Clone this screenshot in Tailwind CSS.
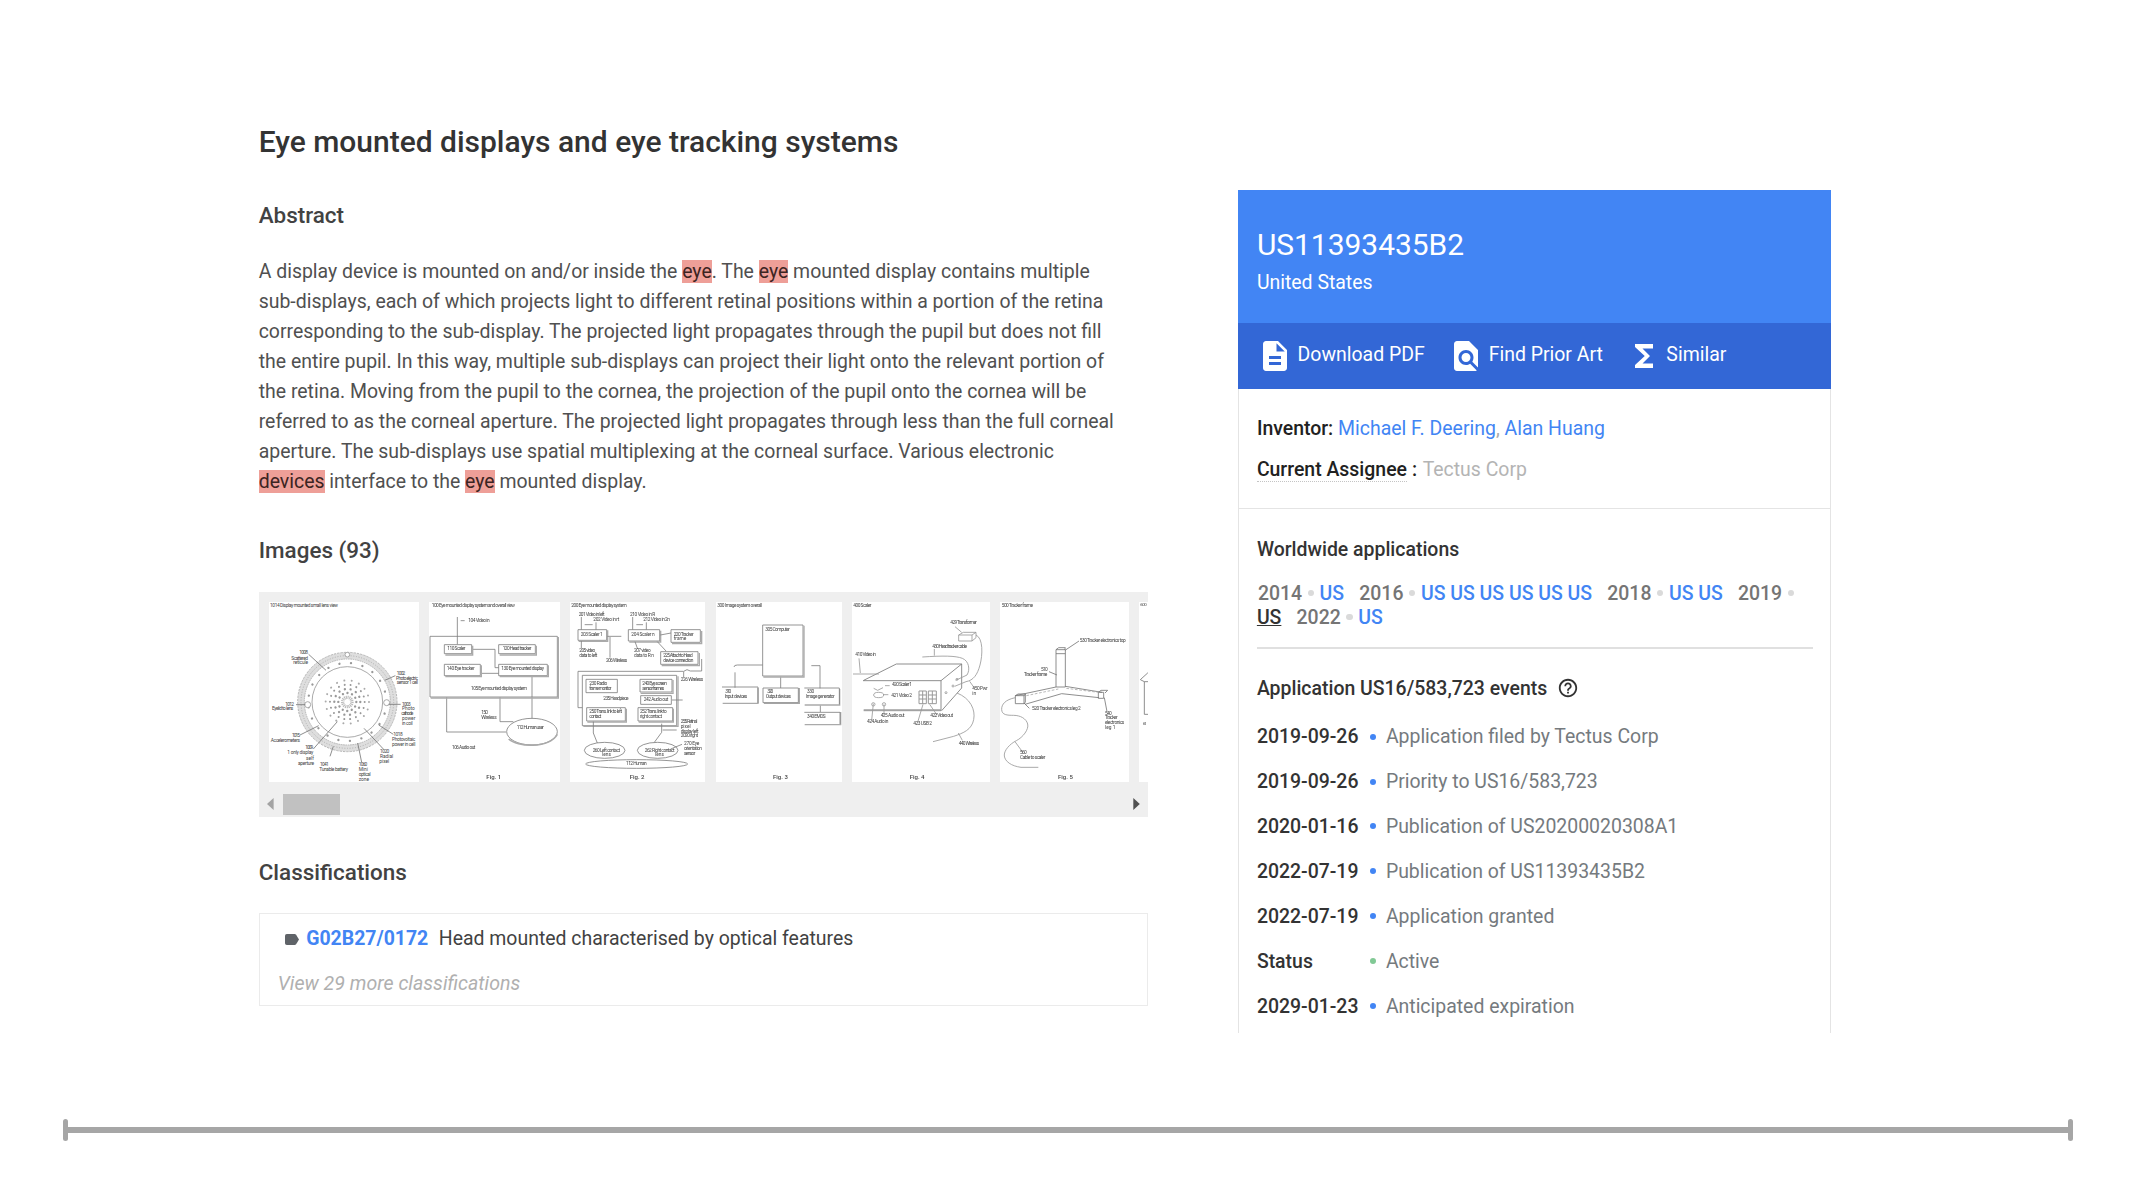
<!DOCTYPE html>
<html lang="en">
<head>
<meta charset="utf-8">
<title>US11393435B2 - Eye mounted displays and eye tracking systems</title>
<script src="https://cdn.jsdelivr.net/npm/@tailwindcss/browser@4"></script>
</head>
<body class="bg-white font-['Roboto',sans-serif] text-[19.46px] leading-[29.93px] text-[#505050]">
<div class="flex h-[1202px] w-[2136px] flex-col overflow-hidden">
  <main class="flex h-[1119px] pl-[258.7px]">
    <section class="w-[889px] shrink-0 pt-[122px]">
      <h1 class="text-[29.97px] leading-10 font-medium whitespace-nowrap text-[#333]">Eye mounted displays and eye tracking systems</h1>
      <h2 class="mt-[38px] text-[22.45px] leading-[30px] font-medium text-[#424242]">Abstract</h2>
      <p class="mt-[27.2px] whitespace-nowrap">
        A display device is mounted on and/or inside the <mark class="bg-[#ee9f98] text-[#3c2422]">eye</mark>. The <mark class="bg-[#ee9f98] text-[#3c2422]">eye</mark> mounted display contains multiple<br>
        sub-displays, each of which projects light to different retinal positions within a portion of the retina<br>
        corresponding to the sub-display. The projected light propagates through the pupil but does not fill<br>
        the entire pupil. In this way, multiple sub-displays can project their light onto the relevant portion of<br>
        the retina. Moving from the pupil to the cornea, the projection of the pupil onto the cornea will be<br>
        referred to as the corneal aperture. The projected light propagates through less than the full corneal<br>
        aperture. The sub-displays use spatial multiplexing at the corneal surface. Various electronic<br>
        <mark class="bg-[#ee9f98] text-[#3c2422]">devices</mark> interface to the <mark class="bg-[#ee9f98] text-[#3c2422]">eye</mark> mounted display.
      </p>
      <h2 class="mt-[38.4px] text-[22.45px] leading-[30px] font-medium text-[#424242]">Images (93)</h2>

      <div class="mt-[26.6px] flex h-[225.3px] flex-col overflow-hidden bg-[#efefef] pt-[10.7px]">
        <div class="flex h-[180px] shrink-0 gap-[10px] pl-[10.5px] blur-[0.4px]">
          <!-- Contact lens overview -->
          <svg class="h-[180px] w-[150px] shrink-0 bg-white" viewBox="57 67 450 540" fill="none" stroke="#999" stroke-width="2.5" font-family="Roboto, sans-serif" font-size="14.5">
            <circle cx="292" cy="367" r="139" stroke="#dedede" stroke-width="19"/>
            <circle cx="292" cy="367" r="149" stroke="#aaa" stroke-dasharray="7 3"/>
            <circle cx="292" cy="367" r="139" stroke="#b0b0b0" stroke-width="3" stroke-dasharray="3 5"/>
            <circle cx="292" cy="367" r="129" stroke="#aaa" stroke-dasharray="5 2"/>
            <circle cx="292" cy="367" r="117" stroke="#999" stroke-width="7" stroke-linecap="round" stroke-dasharray="0.1 35"/>
            <circle cx="292" cy="367" r="106"/>
            <circle cx="292" cy="367" r="14" stroke="#bbb" stroke-width="10" stroke-dasharray="3 2"/>
            <circle cx="292" cy="367" r="27" stroke-width="7" stroke-linecap="round" stroke-dasharray="0.1 14"/>
            <circle cx="292" cy="367" r="39" stroke-width="7" stroke-linecap="round" stroke-dasharray="0.1 17.4"/>
            <circle cx="292" cy="367" r="52" stroke="#999" stroke-width="6" stroke-linecap="round" stroke-dasharray="0.1 18"/>
            <circle cx="292" cy="367" r="65" stroke="#aaa" stroke-width="6" stroke-linecap="round" stroke-dasharray="0.1 22.6"/>
            <g fill="#fff"><circle cx="173" cy="375" r="9"/><circle cx="410" cy="369" r="9"/><circle cx="292" cy="225" r="7"/></g>
            <path d="M176 224l52 48M138 375h28M150 466l56-28M190 508l72-82M240 530l10-30M335 548l-12-58M400 508l-58-62M430 464l-44-28M436 288l-32 14M452 374h-36" stroke="#777"/>
            <g fill="#444" stroke="none">
              <text x="60" y="81" textLength="204">1014 Display mounted small lens view</text>
              <text x="148" y="224" textLength="26">1008</text><text x="124" y="240" textLength="50">Scattered</text><text x="130" y="254" textLength="44">reticule</text>
              <text x="440" y="286" textLength="26">1002</text><text x="438" y="300" textLength="66">Photo electric</text><text x="440" y="314" textLength="64">sensor 1 cell</text>
              <text x="106" y="378" textLength="26">1012</text><text x="66" y="392" textLength="64">Eyelid to lens</text>
              <text x="456" y="378" textLength="26">1003</text><text x="456" y="392">Photo</text><text x="454" y="407" textLength="36">cathode</text><text x="456" y="422">power</text><text x="456" y="437" textLength="32">in coil</text>
              <text x="126" y="471" textLength="24">1015</text><text x="62" y="487" textLength="88">Accelerometers</text>
              <text x="430" y="469" textLength="28">1018</text><text x="426" y="485" textLength="70">Photovoltaic</text><text x="426" y="500" textLength="70">power in cell</text>
              <text x="166" y="508" textLength="24">1009</text><text x="112" y="524" textLength="78">1 only display</text><text x="168" y="540">self</text><text x="144" y="556" textLength="48">aperture</text>
              <text x="390" y="519" textLength="28">1020</text><text x="390" y="534">Radial</text><text x="388" y="549">pixel</text>
              <text x="210" y="558" textLength="26">1041</text><text x="208" y="574" textLength="86">Tunable battery</text>
              <text x="326" y="558" textLength="26">1060</text><text x="326" y="574">Mini</text><text x="326" y="590" textLength="36">optical</text><text x="326" y="604">zone</text>
            </g>
          </svg>
          <!-- Fig. 1 -->
          <svg class="h-[180px] w-[131px] shrink-0 bg-white" viewBox="537 67 393 540" fill="none" stroke="#808080" stroke-width="2.5" font-family="Roboto, sans-serif" font-size="14.5">
            <path d="M540 170h382v182H540zM622 112v82M632 123h12M667 209h68v55h11M693 281h53M846 290v126M590 352v105h178M750 352v74h40"/>
            <path d="M542 355h383V172" stroke="#aaa" stroke-width="4"/>
            <path d="M583 195h82v27h-82zM746 195h110v27H746zM583 254h108v34H583zM746 254h146v34H746z"/>
            <path d="M586 226h82v-28M749 226h110v-28M586 291h108v-34M749 291h146v-34" stroke="#aaa" stroke-width="4"/>
            <ellipse cx="846" cy="456" rx="76" ry="40"/><path d="M776 478c25 24 120 30 146-14" stroke="#aaa" stroke-width="5"/>
            <g fill="#444" stroke="none">
              <text x="545" y="81" textLength="250">100 Eye mounted display system and overall view</text>
              <text x="655" y="127" textLength="64">104 Video in</text>
              <text x="592" y="211" textLength="54">110 Scaler</text><text x="758" y="211" textLength="86">120 Head tracker</text>
              <text x="590" y="270" textLength="84">140 Eye tracker</text><text x="754" y="270" textLength="128">130 Eye mounted display</text>
              <text x="663" y="330" textLength="168">105 Eye mounted display system</text>
              <text x="694" y="404" textLength="20">150</text><text x="694" y="418" textLength="46">Wireless</text>
              <text x="800" y="447" textLength="82">112 Human user</text><text x="606" y="509" textLength="70">106 Audio out</text>
              <text x="709" y="599" font-size="18" font-weight="500">Fig. 1</text>
            </g>
          </svg>
          <!-- Fig. 2 -->
          <svg class="h-[180px] w-[135px] shrink-0 bg-white" viewBox="60 67 405 540" fill="none" stroke="#808080" stroke-width="2.5" font-family="Roboto, sans-serif" font-size="14.5">
            <path d="M84 150h86v32H84zM235 150h94v34h-94zM363 150h88v38h-88zM332 216h112v38H332zM108 299h94v40h-94zM270 299h96v38h-96zM272 348h92v26h-92zM110 384h116v40H110zM264 384h104v40H264z"/>
            <path d="M86 185h87v-33M238 187h94v-34M366 192h89v-38M335 258h113v-38M272 341h97v-40M112 427h117v-40M266 427h104v-40" stroke="#aaa" stroke-width="4"/>
            <path d="M97 287h283v151H97zM97 384H84V275h316"/><path d="M100 440h284V290" stroke="#aaa" stroke-width="4"/>
            <path d="M94 112v38M138 128v22M104 135h24M248 112v38M289 128v22M259 135h20M172 170h42M180 172v62M94 184v22M255 186l8 22M322 186l26 28M331 166l32-6M455 238v36h-34l-10-4-10 5v18M366 361h32M130 426v34l12 30M335 432v26l-22 30M338 451h42M362 508l34-14"/>
            <ellipse cx="164" cy="512" rx="61" ry="24"/><ellipse cx="323" cy="512" rx="61" ry="24"/><ellipse cx="260" cy="553" rx="153" ry="13"/>
            <g fill="#444" stroke="none">
              <text x="64" y="81" textLength="166">200 Eye mounted display system</text>
              <text x="86" y="109" textLength="78">201 Video in left</text><text x="130" y="125" textLength="78">202 Video in rt</text>
              <text x="240" y="109" textLength="76">210 Video in R</text><text x="280" y="125" textLength="80">212 Video in 2n</text>
              <text x="92" y="170" textLength="66">203 Scaler 1</text><text x="244" y="170" textLength="70">204 Scaler n</text>
              <text x="371" y="168" textLength="60">220 Tracker</text><text x="371" y="182">frame</text>
              <text x="88" y="217" textLength="48">205 video</text><text x="88" y="232" textLength="54">data to left</text><text x="168" y="247" textLength="64">206 Wireless</text>
              <text x="252" y="217" textLength="50">207 video</text><text x="252" y="232" textLength="60">data to R n</text>
              <text x="340" y="232" textLength="88">225 Attach to Head</text><text x="340" y="247" textLength="90">device connection</text>
              <text x="392" y="305" textLength="68">226 Wireless</text>
              <text x="118" y="316" textLength="54">230 Radio</text><text x="118" y="330" textLength="66">frame monitor</text>
              <text x="277" y="316" textLength="74">240 Eye screen</text><text x="277" y="330" textLength="66">sensor frames</text>
              <text x="160" y="361" textLength="76">235 Headpiece</text><text x="281" y="365" textLength="74">242 Audio out</text>
              <text x="118" y="400" textLength="98">250 Trans. link to left</text><text x="118" y="414" textLength="36">contact</text>
              <text x="270" y="400" textLength="80">252 Trans. link to</text><text x="270" y="414" textLength="66">right contact</text>
              <text x="392" y="431" textLength="50">255 Retinal</text><text x="392" y="445">pixel</text><text x="392" y="459" textLength="54">display left</text><text x="392" y="473" textLength="52">2020 right</text>
              <text x="128" y="516" textLength="82">260 Left contact</text><text x="156" y="529">lens</text><text x="284" y="516" textLength="90">262 Right contact</text><text x="315" y="529">lens</text>
              <text x="402" y="497" textLength="46">270 Eye</text><text x="402" y="511" textLength="54">orientation</text><text x="402" y="525" textLength="34">sensor</text>
              <text x="228" y="557" textLength="62">112 Human</text>
              <text x="239" y="599" font-size="18" font-weight="500">Fig. 2</text>
            </g>
          </svg>
          <!-- Fig. 3 -->
          <svg class="ml-[0.7px] h-[180px] w-[126px] shrink-0 bg-white" viewBox="498 67 378 540" fill="none" stroke="#808080" stroke-width="2.5" font-family="Roboto, sans-serif" font-size="14.5">
            <path d="M638 136h121v153H638zM638 256h-76q-10 0-10 6M555 278v46M692 291v34M784 258h26v68M811 377v20"/>
            <path d="M640 292h122V138M518 371h106v-46M642 371h106v-46M764 376h105v-48M764 435h108v-38" stroke="#aaa" stroke-width="4"/>
            <path d="M516 322h108v48M639 325h106v44H639zM763 325h105v49M763 398h107v35"/>
            <g fill="#444" stroke="none">
              <text x="502" y="81" textLength="134">300 Image system overall</text><text x="646" y="153" textLength="74">305 Computer</text>
              <text x="526" y="339" textLength="18">310</text><text x="524" y="354" textLength="68">Input devices</text><text x="652" y="341" textLength="18">320</text><text x="647" y="356" textLength="76">Output devices</text>
              <text x="771" y="341" textLength="22">330</text><text x="768" y="356" textLength="86">Image generator</text><text x="771" y="416" textLength="56">340 EMDS</text>
              <text x="669" y="599" font-size="18" font-weight="500">Fig. 3</text>
            </g>
          </svg>
          <!-- Fig. 4 -->
          <svg class="h-[180px] w-[138px] shrink-0 bg-white" viewBox="35 67 414 540" fill="none" stroke="#999" stroke-width="2.5" font-family="Roboto, sans-serif" font-size="14.5">
            <path d="M68 303h234v90H70M302 303l62-50H168L70 302M364 253v72l-60 68" stroke="#777"/><path d="M70 390h232" stroke="#aaa" stroke-width="3"/>
            <path d="M355 166h40v18h-40zM355 166l14-8h38l-12 8M407 158v16l-12 10M344 141l20 17"/>
            <path d="M407 166c22 10 20 60 12 90s-20 46-42 50l-34 14M246 232c60-4 100-4 120 4s24 34 14 50l-34 16M350 340c40 16 56 50 50 80s-30 40-60 50l-62 16M282 208v20M56 236l4 44M38 283h78M388 305l14 20M354 460l12 22M248 374l-16 54M268 374l22 32M99 372l-5 50M131 374v30M134 318h14M128 345h16M100 326l12 6 16-8"/>
            <ellipse cx="115" cy="346" rx="15" ry="8"/><circle cx="99" cy="374" r="5"/><circle cx="131" cy="374" r="5"/><circle cx="350" cy="299" r="3"/><circle cx="338" cy="319" r="3"/><circle cx="317" cy="339" r="3"/>
            <path d="M236 334h22v38h-22zM264 334h24v38h-24zM236 346h22M236 358h22M247 334v38M264 346h24M264 358h24M276 334v38" stroke-width="3"/>
            <g fill="#444" stroke="none">
              <text x="39" y="81" textLength="54">400 Scaler</text><text x="330" y="132" textLength="80">429 Transformer</text><text x="276" y="206" textLength="104">430 Head tracker cable</text>
              <text x="45" y="229" textLength="62">410 Video in</text><text x="155" y="318" textLength="60">420 Scaler 1</text><text x="153" y="351" textLength="62">421 Video 2</text>
              <text x="121" y="411" textLength="72">425 Audio out</text><text x="80" y="429" textLength="64">424 Audio in</text><text x="270" y="412" textLength="68">422 Video out</text><text x="219" y="435" textLength="56">423 USB 2</text>
              <text x="396" y="332" textLength="46">450 Pwr</text><text x="396" y="346">in</text><text x="355" y="495" textLength="62">440 Wireless</text>
              <text x="208" y="599" font-size="18" font-weight="500">Fig. 4</text>
            </g>
          </svg>
          <!-- Fig. 5 -->
          <svg class="h-[180px] w-[129px] shrink-0 bg-white" viewBox="481 67 387 540" fill="none" stroke="#999" stroke-width="2.5" font-family="Roboto, sans-serif" font-size="14.5">
            <path d="M649 210v112M677 210v112M649 210h28M649 222h28M649 210l8-6h20l-2 6M649 322h28M718 184l-42 28M628 276l24 10" stroke="#777"/>
            <path d="M649 322l-122 26M677 320l110 18M556 374l110-32 112 12M527 348h26v24h-26zM527 348l8-5h22l-4 6M557 343v24l-4 6M776 338h16v18h-16zM776 338l8-6h20l-8 8M553 370l16 16M794 354l8 42" stroke="#777"/>
            <path d="M560 348l96-20M680 326l96 12" stroke="#aaa" stroke-dasharray="8 5"/>
            <path d="M527 354c-30 6-42 20-41 36s16 17 36 17 38 10 42 26-14 40-34 50-38 30-36 46 20 30 50 34h52M526 486l22 30"/>
            <g fill="#444" stroke="none">
              <text x="486" y="81" textLength="94">500 Tracker frame</text><text x="720" y="188" textLength="138">530 Tracker electronics top</text>
              <text x="604" y="275" textLength="20">510</text><text x="553" y="290" textLength="70">Tracker frame</text><text x="577" y="390" textLength="146">520 Tracker electronics leg 2</text>
              <text x="796" y="405" textLength="20">540</text><text x="796" y="419" textLength="38">Tracker</text><text x="796" y="433" textLength="58">electronics</text><text x="796" y="447">leg 1</text>
              <text x="541" y="524" textLength="20">560</text><text x="541" y="539" textLength="76">Cable to scaler</text>
              <text x="655" y="599" font-size="18" font-weight="500">Fig. 5</text>
            </g>
          </svg>
          <!-- Fig. 6, cut by the scroller's edge -->
          <svg class="h-[180px] w-[129px] shrink-0 bg-white" viewBox="898 67 387 540" fill="none" stroke="#777" stroke-width="2.5" font-family="Roboto, sans-serif" font-size="13">
            <path d="M902 300l22-20 60 20v104h-70V306zM914 306h70"/>
            <g fill="#444" stroke="none"><text x="902" y="80" textLength="19">600</text><text x="910" y="436" textLength="11">61</text></g>
          </svg>
        </div>
        <div class="mt-[9.5px] flex h-[25px] shrink-0 items-center pr-[8px] pl-[8.3px]">
          <svg class="h-[12px] w-[7px]" viewBox="0 0 7 12"><path d="M6.6 0v12L0 6z" fill="#a3a3a3"/></svg>
          <div class="ml-[9.3px] h-[21px] w-[57px] bg-[#c1c1c1]"></div>
          <svg class="ml-auto h-[12px] w-[7px]" viewBox="0 0 7 12"><path d="M0.3 0v12L6.8 6z" fill="#505050"/></svg>
        </div>
      </div>

      <h2 class="mt-[39.8px] text-[22.45px] leading-[30px] font-medium text-[#424242]">Classifications</h2>
      <div class="mt-[26.4px] h-[92.5px] border-[1.5px] border-[#ebebeb] pt-[10px]">
        <div class="flex items-center pl-[25.5px]">
          <svg class="mt-[1px] h-[11px] w-[14px]" viewBox="0 0 14 11"><path d="M1.8 0H9.6q.9 0 1.5.7L14 5.5l-2.9 4.8q-.6.7-1.5.7H1.8Q0 11 0 9.3V1.7Q0 0 1.8 0z" fill="#5f6368"/></svg>
          <span class="ml-[7px] font-bold text-[#4285f4]">G02B27/0172</span>
          <span class="ml-[10.500px] text-[#424242]">Head mounted characterised by optical features</span>
        </div>
        <div class="mt-[15px] pl-[18px] text-[19.6px] text-[#b0b0b0] italic">View 29 more classifications</div>
      </div>
    </section>

    <aside class="mt-[190.300px] ml-[90.700px] h-[843px] w-[592.3px] shrink-0">
      <header class="h-[133px] bg-[#4285f4] pt-[34.700px] pl-[18.5px] text-white">
        <div class="text-[29.93px] leading-[40px]">US11393435B2</div>
        <div class="mt-[3px]">United States</div>
      </header>
      <nav class="flex h-[66.2px] items-center bg-[#3367d6] pl-[18.5px] text-white">
        <svg class="h-[36px] w-[36px]" viewBox="0 0 24 24" fill="#fff"><path d="M14 2H6c-1.1 0-1.99.9-1.99 2L4 20c0 1.1.89 2 1.99 2H18c1.1 0 2-.9 2-2V8l-6-6zm2 16H8v-2h8v2zm0-4H8v-2h8v2zm-3-5V3.500L18.500 9H13z"/></svg>
        <span class="-mt-[2px] ml-[4.700px]">Download PDF</span>
        <svg class="ml-[23px] h-[36px] w-[36px]" viewBox="0 0 24 24" fill="#fff"><path d="M20 19.590V8l-6-6H6c-1.100 0-1.990.9-1.990 2L4 20c0 1.100.89 2 1.990 2H18c.45 0 .85-.15 1.190-.4l-4.430-4.430c-.8.52-1.740.83-2.760.83-2.760 0-5-2.240-5-5s2.240-5 5-5 5 2.240 5 5c0 1.020-.31 1.960-.83 2.750L20 19.590zM9 13c0 1.660 1.340 3 3 3s3-1.340 3-3-1.340-3-3-3-3 1.340-3 3z"/></svg>
        <span class="-mt-[2px] ml-[5px]">Find Prior Art</span>
        <svg class="ml-[23px] h-[36px] w-[36px]" viewBox="0 0 24 24" fill="#fff"><path d="M18 4H6v2l6.500 6L6 18v2h12v-3h-7l5-5-5-5h7z"/></svg>
        <span class="-mt-[2px] ml-[4.500px]">Similar</span>
      </nav>
      <div class="h-[643.5px] border-x-[1.5px] border-[#e4e4e4]">
        <div class="h-[120px] border-b-[1.5px] border-[#e4e4e4] pt-[24.500px] pl-[17.500px]">
          <div><span class="font-medium text-[#212121]">Inventor:</span> <span class="text-[#aaa]"><a class="text-[#4285f4]">Michael F. Deering</a>, <a class="text-[#4285f4]">Alan Huang</a></span></div>
          <div class="mt-[11px] flex"><span class="h-[27px] border-b border-dotted border-[#c4c4c4] font-medium text-[#212121]">Current Assignee</span><span class="ml-[5px] font-medium text-[#212121]">:</span><span class="ml-[5.500px] text-[#b4b4b4]">Tectus Corp</span></div>
        </div>
        <div class="mr-[17px] ml-[17.500px] h-[140px] border-b-[2px] border-[#e0e0e0] pt-[25.500px]">
          <h3 class="font-medium text-[#333]">Worldwide applications</h3>
          <div class="mt-[17px] flex items-center pl-px leading-6 font-medium whitespace-nowrap text-[#757575]">
            <span>2014</span><i class="-mt-[2px] mx-[5.500px] size-[6.500px] rounded-full bg-[#dadada]"></i><a class="text-[#4285f4]">US</a>
            <span class="ml-[15.200px]">2016</span><i class="-mt-[2px] mx-[5.500px] size-[6.500px] rounded-full bg-[#dadada]"></i><a class="text-[#4285f4]">US US US US US US</a>
            <span class="ml-[15.200px]">2018</span><i class="-mt-[2px] mx-[5.500px] size-[6.500px] rounded-full bg-[#dadada]"></i><a class="text-[#4285f4]">US US</a>
            <span class="ml-[15.200px]">2019</span><i class="-mt-[2px] mx-[5.500px] size-[6.500px] rounded-full bg-[#dadada]"></i>
          </div>
          <div class="flex items-center leading-6 font-medium whitespace-nowrap text-[#757575]">
            <a class="text-[#333] underline">US</a><span class="ml-[15.200px]">2022</span><i class="-mt-[2px] mx-[5.500px] size-[6.500px] rounded-full bg-[#dadada]"></i><a class="text-[#4285f4]">US</a>
          </div>
        </div>
        <div class="flex items-center pt-[24.500px] pl-[17.500px]">
          <h3 class="font-medium text-[#333]">Application US16/583,723 events</h3>
          <svg class="-mt-px ml-[9.500px] size-[22px]" viewBox="0 0 24 24" fill="#333"><path d="M11 18h2v-2h-2v2zm1-16C6.480 2 2 6.480 2 12s4.480 10 10 10 10-4.480 10-10S17.520 2 12 2zm0 18c-4.410 0-8-3.590-8-8s3.590-8 8-8 8 3.590 8 8-3.590 8-8 8zm0-14c-2.210 0-4 1.790-4 4h2c0-1.100.9-2 2-2s2 .9 2 2c0 2-3 1.750-3 5h2c0-2.250 3-2.500 3-5 0-2.210-1.790-4-4-4z"/></svg>
        </div>
        <div class="mt-[11.300px] flex flex-col pl-[17.500px] leading-[44.900px] text-[#757a7e]">
          <div class="flex h-[44.900px] items-center"><b class="w-[113.500px] font-medium text-[#333]">2019-09-26</b><i class="-mt-[2px] mr-[9.500px] size-[6px] rounded-full bg-[#4285f4]"></i><span>Application filed by Tectus Corp</span></div>
          <div class="flex h-[44.900px] items-center"><b class="w-[113.500px] font-medium text-[#333]">2019-09-26</b><i class="-mt-[2px] mr-[9.500px] size-[6px] rounded-full bg-[#4285f4]"></i><span>Priority to US16/583,723</span></div>
          <div class="flex h-[44.900px] items-center"><b class="w-[113.500px] font-medium text-[#333]">2020-01-16</b><i class="-mt-[2px] mr-[9.500px] size-[6px] rounded-full bg-[#4285f4]"></i><span>Publication of US20200020308A1</span></div>
          <div class="flex h-[44.900px] items-center"><b class="w-[113.500px] font-medium text-[#333]">2022-07-19</b><i class="-mt-[2px] mr-[9.500px] size-[6px] rounded-full bg-[#4285f4]"></i><span>Publication of US11393435B2</span></div>
          <div class="flex h-[44.900px] items-center"><b class="w-[113.500px] font-medium text-[#333]">2022-07-19</b><i class="-mt-[2px] mr-[9.500px] size-[6px] rounded-full bg-[#4285f4]"></i><span>Application granted</span></div>
          <div class="flex h-[44.900px] items-center"><b class="w-[113.500px] font-medium text-[#333]">Status</b><i class="-mt-[2px] mr-[9.500px] size-[6px] rounded-full bg-[#81c995]"></i><span>Active</span></div>
          <div class="flex h-[44.900px] items-center"><b class="w-[113.500px] font-medium text-[#333]">2029-01-23</b><i class="-mt-[2px] mr-[9.500px] size-[6px] rounded-full bg-[#4285f4]"></i><span>Anticipated expiration</span></div>
        </div>
      </div>
    </aside>
  </main>
  <footer class="flex items-center pr-[63px] pl-[62.700px]">
    <div class="h-[22px] w-[5.500px] rounded-full bg-[#a6a6a6]"></div>
    <div class="-mx-px h-[6px] grow bg-[#a6a6a6]"></div>
    <div class="h-[22px] w-[5.500px] rounded-full bg-[#a6a6a6]"></div>
  </footer>
</div>
</body>
</html>
